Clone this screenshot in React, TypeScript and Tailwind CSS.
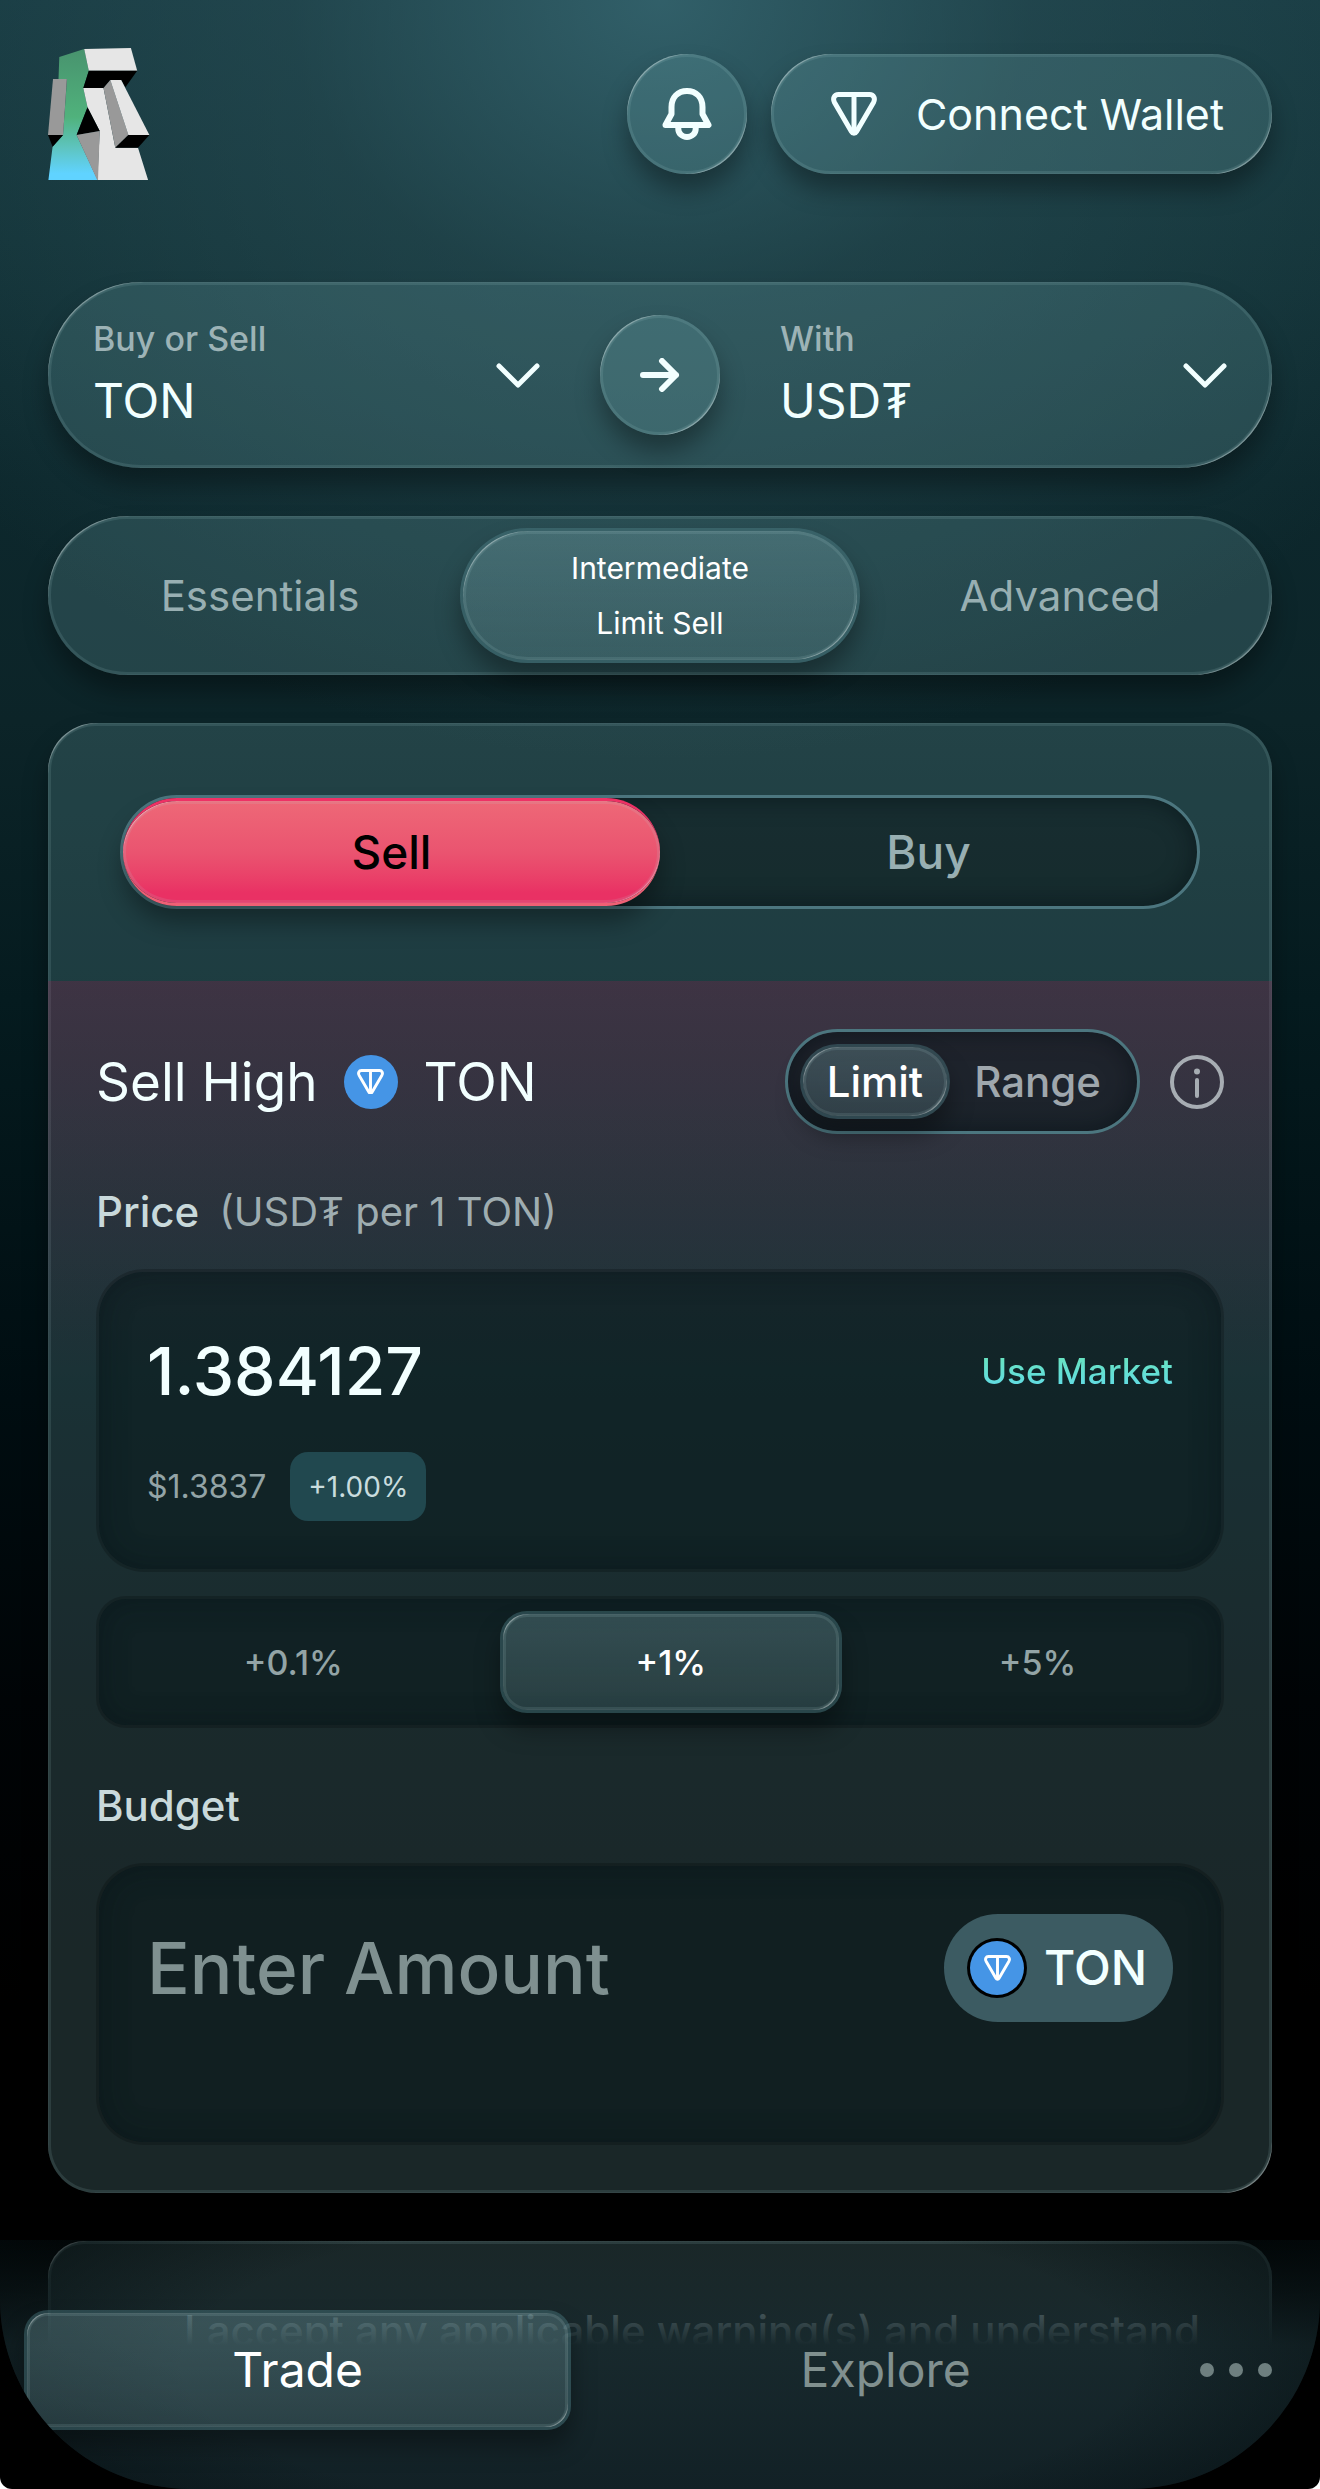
import React, { PropsWithChildren, useState } from "react";
import clsx from "clsx";

// thin rim plus a brighter glint in the top-left and bottom-right corners
const rim =
  "shadow-[inset_0_0_0_3px_rgba(180,220,225,0.12),inset_3px_3px_1px_-3px_rgba(255,255,255,0.4),inset_-3px_-3px_1px_-3px_rgba(255,255,255,0.4),0_16px_24px_rgba(0,0,0,0.35)]";
const glass = clsx("bg-[#7cb8be]/21", rim);
const raised = clsx(
  "border-[3px] border-[#4f838a]/40 bg-linear-to-b from-[#86b6bd]/30 to-[#86b6bd]/20 bg-clip-padding text-white",
  rim
);
const sunken =
  "border-[3px] border-black/20 bg-[#08171a]/50 bg-clip-padding shadow-[inset_0_0_30px_rgba(0,16,20,0.4)]";

type IconProps = { className?: string };

function Logo() {
  return (
    <svg viewBox="0 0 102 132" className="h-[132px] w-[102px]" aria-label="Home">
      <defs>
        <linearGradient id="logo-side" x1="0" y1="0" x2="0" y2="1">
          <stop offset="0" stopColor="#48936e" />
          <stop offset="0.52" stopColor="#50b27c" />
          <stop offset="0.75" stopColor="#5ec4be" />
          <stop offset="0.95" stopColor="#60d3ff" />
        </linearGradient>
      </defs>
      <path
        fill="url(#logo-side)"
        d="M11.3 9 36.2 1l4.6 21.7L35.3 40l4.2 19.3L28.6 87l21 45H.4l4.2-33.3L15 87l4-56h-8.5z"
      />
      <path fill="#e6e6e6" d="M36.2 1 82.9 0l6.3 22.7H40.8z" />
      <path d="M40.8 22.7h48.4L77.4 39.3 73.2 32H62.3l-6.8 8H35.3z" />
      <path
        fill="#e6e6e6"
        d="M35.3 40h20.2l11.8 59.7H90l10.1 32.3H49.4l2.3-49-12.2-23.7z"
      />
      <path fill="#999" d="M62.3 32 80.4 87 67.3 99.7 55.5 40z" />
      <path fill="#e6e6e6" d="M62.3 32h10.9l28.2 55h-21z" />
      <path d="M80.4 87h21L90 99.7H67.3z" />
      <path fill="#999" d="M5 31h13.9L15.1 87H0z" />
      <path d="M0 87h15.1L4.6 98.7z" />
      <path d="M39.5 59.3 51.7 83l-23.1 4z" />
      <path fill="#999" d="M28.6 87 51.7 83 50 132h-.8z" />
    </svg>
  );
}

function TonMark({ className }: IconProps) {
  return (
    <svg
      viewBox="0 0 46 44"
      fill="none"
      stroke="currentColor"
      strokeWidth="5"
      strokeLinejoin="round"
      className={className}
      aria-hidden
    >
      <path d="M7.5 2.6h31c4.4 0 6 4.2 4 7.9L25.6 39.6c-1.2 2.2-4 2.2-5.2 0L3.5 10.5c-2-3.7-.4-7.9 4-7.9z" />
      <path d="M23 3v37" />
    </svg>
  );
}

function TonCoin({ className }: IconProps) {
  return (
    <span
      className={clsx(
        "flex size-[54px] shrink-0 items-center justify-center rounded-full bg-[#4595e6] text-white",
        className
      )}
    >
      <TonMark className="w-[27px]" />
    </span>
  );
}

function Bell() {
  return (
    <svg
      viewBox="0 0 50 52"
      fill="none"
      stroke="currentColor"
      strokeWidth="6"
      strokeLinejoin="round"
      className="w-[50px]"
      aria-hidden
    >
      <path d="M3.5 37 9.5 26v-7C9.5 9 16 3 25 3s15.5 6 15.5 16v7l6 11z" />
      <path d="M16.3 38v3a8.7 8 0 0 0 17.4 0v-3" />
    </svg>
  );
}

function Chevron() {
  return (
    <svg
      viewBox="0 0 44 25"
      fill="none"
      stroke="currentColor"
      strokeWidth="5"
      strokeLinecap="round"
      strokeLinejoin="round"
      className="pointer-events-none w-11 shrink-0"
      aria-hidden
    >
      <path d="M3 3 22 22 41 3" />
    </svg>
  );
}

function Arrow() {
  return (
    <svg
      viewBox="0 0 40 34"
      fill="none"
      stroke="currentColor"
      strokeWidth="6"
      strokeLinecap="round"
      strokeLinejoin="round"
      className="w-10"
      aria-hidden
    >
      <path d="M3 17h33M22 3l14 14-14 14" />
    </svg>
  );
}

function Info() {
  return (
    <svg viewBox="0 0 54 54" fill="none" stroke="currentColor" className="w-[54px]" aria-hidden>
      <circle cx="27" cy="27" r="25" strokeWidth="4" />
      <path d="M27 25v16" strokeWidth="4" strokeLinecap="round" />
      <circle cx="27" cy="16.5" r="3" fill="currentColor" stroke="none" />
    </svg>
  );
}

function TokenSelect({ label, token }: { label: string; token: string }) {
  return (
    <label className="flex min-w-0 flex-1 items-center">
      <span className="flex min-w-0 flex-1 flex-col">
        <span className="text-[34px] leading-[52px] font-medium text-[#9db3b6]">{label}</span>
        <select className="h-[72px] appearance-none bg-transparent text-[48px] leading-[72px] outline-none">
          <option>{token}</option>
        </select>
      </span>
      <Chevron />
    </label>
  );
}

function FieldLabel({ children, htmlFor }: PropsWithChildren<{ htmlFor: string }>) {
  return (
    <label htmlFor={htmlFor} className="text-[42px] leading-[60px] font-medium text-[#c9d9db]">
      {children}
    </label>
  );
}

const steps = ["+0.1%", "+1%", "+5%"];

export default function App() {
  const [mode, setMode] = useState("Limit");
  const [step, setStep] = useState("+1%");
  const [price, setPrice] = useState("1.384127");
  const [amount, setAmount] = useState("");

  return (
    <div className="h-screen bg-white font-['Inter','DejaVu_Sans',sans-serif] text-[#f2ffff]">
      <div className="h-full overflow-hidden rounded-b-[12px] bg-black">
        <div className="relative h-full overflow-hidden rounded-b-[190px] bg-[radial-gradient(ellipse_70%_760px_at_50%_0,rgba(54,102,112,0.85),rgba(46,84,92,0.45)_40%,transparent),linear-gradient(#163940,#123237_240px,#0d282d_480px,#0c2428_720px,#051b1f_1000px,#000d11_1400px,#000406_1700px,#000_2000px)] px-12 pt-12">
          <header className="flex items-center justify-between">
            <a href="#">
              <Logo />
            </a>
            <div className="flex gap-6">
              <button
                aria-label="Notifications"
                className={clsx(
                  "flex size-[120px] items-center justify-center rounded-full",
                  glass
                )}
              >
                <Bell />
              </button>
              <button
                className={clsx(
                  "flex h-[120px] items-center gap-[39px] rounded-full pr-12 pl-[60px] text-[43px]",
                  glass
                )}
              >
                <TonMark className="w-[46px]" />
                Connect Wallet
              </button>
            </div>
          </header>

          <main className="mt-[102px] flex flex-col gap-12">
            <div
              className={clsx(
                "flex h-[186px] items-center gap-[60px] rounded-full px-[45px]",
                glass
              )}
            >
              <TokenSelect label="Buy or Sell" token="TON" />
              <button
                aria-label="Swap tokens"
                className={clsx(
                  "flex size-[120px] shrink-0 items-center justify-center rounded-full",
                  glass
                )}
              >
                <Arrow />
              </button>
              <TokenSelect label="With" token="USD₮" />
            </div>

            <div
              className={clsx(
                "grid h-[159px] grid-cols-3 rounded-full p-3 text-[42px] text-[#98afb2]",
                glass
              )}
            >
              <button>Essentials</button>
              <button className={clsx("rounded-full text-[30px] leading-[55px]", raised)}>
                Intermediate
                <br />
                Limit Sell
              </button>
              <button>Advanced</button>
            </div>

            <section className={clsx("overflow-hidden rounded-[48px]", glass)}>
              <div className="p-[72px]">
                <div className="grid h-[114px] grid-cols-2 rounded-full border-[3px] border-[#4c767f] bg-black/30 bg-clip-padding text-[46px] font-medium shadow-[inset_0_0_24px_rgba(0,10,14,0.5)]">
                  <button
                    className={clsx(
                      "rounded-full border-y-[3px] border-t-[#ee3165] border-b-[#ee6075] bg-linear-to-b from-[#ee6877] via-[#ea5470] via-50% to-[#e93164] to-90% bg-clip-padding text-black",
                      rim
                    )}
                  >
                    Sell
                  </button>
                  <button className="text-[#98afb2]">Buy</button>
                </div>
              </div>

              <div className="bg-linear-to-b from-[#a0184c]/25 to-[#a0184c]/0 to-[400px] p-12">
                <div className="flex items-center justify-between">
                  <h1 className="flex items-center gap-[26px] text-[53px] leading-[72px]">
                    Sell High
                    <TonCoin />
                    TON
                  </h1>
                  <div className="flex items-center gap-[30px]">
                    <div className="flex h-[105px] rounded-full border-[3px] border-[#4c767f] bg-[#061317]/50 bg-clip-padding p-3 text-[42px] font-medium shadow-[inset_0_0_24px_rgba(0,10,14,0.5)]">
                      {["Limit", "Range"].map((item) => (
                        <button
                          key={item}
                          onClick={() => setMode(item)}
                          className={clsx(
                            "rounded-full px-6",
                            mode === item ? raised : "text-[#9fa7ad]"
                          )}
                        >
                          {item}
                        </button>
                      ))}
                    </div>
                    <button aria-label="About limit orders" className="text-[#a7adb3]">
                      <Info />
                    </button>
                  </div>
                </div>

                <div className="mt-12 mb-[27px] flex gap-5">
                  <FieldLabel htmlFor="price">Price</FieldLabel>
                  <span className="text-[40px] leading-[60px] text-[#9fadb1]">
                    (USD₮ per 1 TON)
                  </span>
                </div>
                <div className={clsx("rounded-[48px] p-12", sunken)}>
                  <div className="flex h-[102px] items-center">
                    <input
                      id="price"
                      value={price}
                      onChange={(e) => setPrice(e.target.value)}
                      className="min-w-0 flex-1 bg-transparent text-[66px] font-medium outline-none"
                    />
                    <button className="bg-linear-to-b from-[#6ce6b0] to-[#5fd8f0] bg-clip-text text-[35px] font-medium text-transparent">
                      Use Market
                    </button>
                  </div>
                  <div className="mt-[30px] flex items-center gap-6">
                    <span className="text-[32px] text-[#93a4a6]">$1.3837</span>
                    <span className="flex h-[69px] items-center rounded-[18px] bg-[#21484f] px-[18px] text-[28px] text-[#c9dcde]">
                      +1.00%
                    </span>
                  </div>
                </div>

                <div
                  className={clsx(
                    "mt-6 flex h-[132px] gap-6 rounded-[30px] p-3 text-[34px] font-medium",
                    sunken
                  )}
                >
                  {steps.map((item) => (
                    <button
                      key={item}
                      onClick={() => setStep(item)}
                      className={clsx(
                        "flex-auto rounded-[27px]",
                        step === item ? raised : "text-[#93a4a6]"
                      )}
                    >
                      {item}
                    </button>
                  ))}
                </div>

                <div className="mt-12 mb-[27px] flex">
                  <FieldLabel htmlFor="budget">Budget</FieldLabel>
                </div>
                <div className={clsx("h-[282px] rounded-[48px] p-12", sunken)}>
                  <div className="flex h-[108px] items-center">
                    <input
                      id="budget"
                      placeholder="Enter Amount"
                      value={amount}
                      onChange={(e) => setAmount(e.target.value)}
                      className="min-w-0 flex-1 bg-transparent text-[71px] font-medium outline-none placeholder:text-[#7f9090]"
                    />
                    <button className="flex h-full items-center gap-5 rounded-full bg-[#3c5b62] px-[26px] text-[48px] font-medium">
                      <TonCoin className="ring-[3px] ring-black" />
                      TON
                    </button>
                  </div>
                </div>
              </div>
            </section>

            <section
              className={clsx(
                "rounded-[36px] py-[60px] pr-12 pl-[112px] text-center text-[42px] leading-[60px] font-medium text-[#9fb0b3]",
                glass
              )}
            >
              I accept any applicable warning(s) and understand
            </section>
          </main>

          <nav className="absolute inset-x-0 bottom-0 bg-[radial-gradient(ellipse_60%_100%_at_50%_50%,transparent_60%,rgba(3,12,14,0.7)),linear-gradient(to_bottom,rgba(24,40,45,0)_0,#18292d_105px,#122126)] px-6 pt-[70px] pb-[59px]">
            <div className="flex h-[120px] items-stretch gap-6 text-[48px]">
              <a
                href="#"
                className={clsx("flex flex-auto items-center justify-center rounded-3xl", raised)}
              >
                Trade
              </a>
              <a href="#" className="flex flex-auto items-center justify-center text-[#80908f]">
                Explore
              </a>
              <button
                aria-label="More"
                className="mr-6 flex w-[72px] items-center justify-between text-[#6e7f7f]"
              >
                <span className="size-[14px] rounded-full bg-current" />
                <span className="size-[14px] rounded-full bg-current" />
                <span className="size-[14px] rounded-full bg-current" />
              </button>
            </div>
          </nav>
        </div>
      </div>
    </div>
  );
}
